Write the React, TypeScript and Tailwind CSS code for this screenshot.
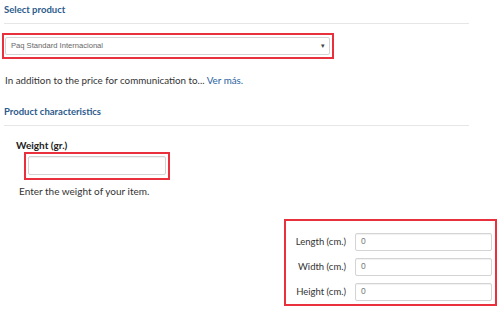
import React from "react"

const red = "border-2 border-[#e8313c]"

function TextInput({ value, className }: { value?: string; className?: string }) {
  return (
    <div
      className={`h-[18px] bg-white border border-[#d4d4d4] rounded-[2px] shadow-[inset_0_1px_1px_rgba(0,0,0,0.06)] flex items-center px-[5px] text-[8.5px] text-[#777] font-['Liberation_Sans',sans-serif] ${className ?? ""}`}
    >
      {value}
    </div>
  )
}

function SectionTitle({ children }: { children: React.ReactNode }) {
  return (
    <div className="w-[465px] border-b border-[#e6e6e6]">
      <h2 className="text-[9.5px] font-bold text-[#2c5b8c] leading-none pt-[5px] pb-[8px]">{children}</h2>
    </div>
  )
}

function DimRow({ label }: { label: string }) {
  return (
    <div className="flex items-center gap-[9px]">
      <span className="w-[54px] text-right text-[9.5px] text-[#333] whitespace-nowrap">{label}</span>
      <TextInput value="0" className="w-[137px]" />
    </div>
  )
}

export default function App() {
  return (
    <div className="w-[500px] h-[309px] bg-white overflow-hidden font-['Lato',sans-serif] text-[#333]">
      <div className="pl-[4px]">
        <SectionTitle>Select product</SectionTitle>
      </div>

      {/* product select */}
      <div className={`ml-[2px] mt-[9px] w-[332px] h-[26px] ${red} flex items-center pl-[1px] pr-[2px] pt-[1px]`}>
        <div className="relative flex-1 h-[18px] bg-white border border-[#d4d4d4] rounded-[2px] flex items-center px-[5px] text-[7.6px] text-[#666] font-['Liberation_Sans',sans-serif]">
          Paq Standard Internacional
          <span className="absolute right-[4px] top-[3px] text-[7px] text-[#444]">▾</span>
        </div>
      </div>

      <p className="pl-[5px] mt-[17px] text-[9.8px] leading-none">
        In addition to the price for communication to...{" "}
        <a className="text-[#2a63a0]">Ver más.</a>
      </p>

      <div className="pl-[4px] mt-[17px]">
        <SectionTitle>Product characteristics</SectionTitle>
      </div>

      {/* weight */}
      <div className="pl-[16px] mt-[14px]">
        <div className="text-[10px] font-bold text-[#222] leading-none">Weight (gr.)</div>
        <div className={`ml-[8px] mt-[2px] w-[146px] h-[28px] ${red} flex items-center pl-[2px] pr-[2px]`}>
          <TextInput className="flex-1 h-[19px]" />
        </div>
        <div className="ml-[3px] mt-[6px] text-[10px] leading-none">Enter the weight of your item.</div>
      </div>

      {/* dimensions */}
      <div className="flex justify-end pr-[3px] mt-[23px]">
        <div className={`w-[213px] h-[87px] ${red} flex flex-col gap-[7px] pt-[12px] pl-[6px]`}>
          <DimRow label="Length (cm.)" />
          <DimRow label="Width (cm.)" />
          <DimRow label="Height (cm.)" />
        </div>
      </div>
    </div>
  )
}
